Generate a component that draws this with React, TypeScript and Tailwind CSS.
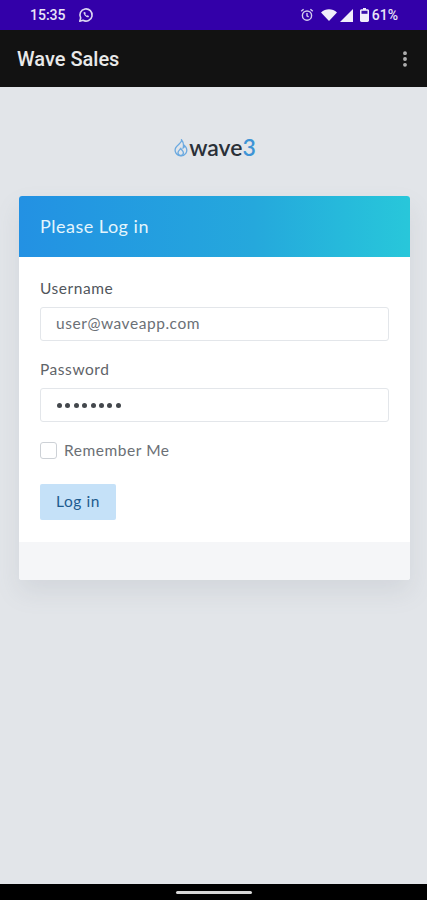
import { MoreVertical } from "lucide-react"

function WhatsappIcon() {
  return (
    <svg viewBox="0 0 16 16" className="h-[16px] w-[16px]" fill="none" stroke="#dcd6f2" strokeWidth="1.6">
      <path d="M1.8 14.2l.9-3.2A6.1 6.1 0 1 1 5 13.3l-3.2.9z" strokeLinejoin="round" />
      <path d="M5.6 5.2c-.3 2.4 2.6 5.4 5 5.1l.4-1.3-1.5-.8-.7.6c-.7-.3-1.3-1-1.6-1.7l.6-.7-.7-1.5-1.5.3z" fill="#dcd6f2" stroke="none" />
    </svg>
  )
}

function StatusIcons() {
  return (
    <div className="flex items-center">
      <svg viewBox="0 0 14 14" className="mr-[7px] h-[14px] w-[14px]" fill="none" stroke="#d4cdee" strokeWidth="1.4">
        <circle cx="7" cy="7.6" r="4.6" />
        <path d="M7 5v2.8l1.6 1M1.2 3.2l2.4-2M12.8 3.2l-2.4-2" />
      </svg>
      <svg viewBox="0 0 16 12" className="mr-[3px] h-[12px] w-[16px]" fill="#f1eefb">
        <path d="M0 3.4C4.6-.8 11.4-.8 16 3.4L8 12z" />
      </svg>
      <svg viewBox="0 0 13 13" className="mr-[7px] h-[13px] w-[13px]" fill="#f1eefb">
        <path d="M13 0v13H0z" />
      </svg>
      <svg viewBox="0 0 9 14" className="mr-[3px] h-[14px] w-[9px]" fill="#f1eefb">
        <path d="M3 0h3v1.2h1.4c.9 0 1.6.6 1.6 1.4v10c0 .8-.7 1.4-1.6 1.4H1.6C.7 14 0 13.4 0 12.6v-10c0-.8.7-1.4 1.6-1.4H3z" />
        <rect x="1.5" y="2.8" width="6" height="3" fill="#3a10ac" />
      </svg>
      <span className="text-[14px] font-medium text-[#e8e4f7]">61%</span>
    </div>
  )
}

function Logo() {
  return (
    <div className="flex items-center justify-center">
      <svg viewBox="0 0 16 18" className="h-[18px] w-[16px]" fill="none" stroke="#6aa9e0" strokeWidth="1.3">
        <path d="M8.6 1c.4 3-3.8 4.2-5.8 7.6C.8 12.2 3.600 16.800 8 16.800c4.200 0 6.800-4 5.400-7.600-.5-1.200-1.200-2-1.800-2.600-.1 1.200-.6 2-1.400 2.400C10.800 6 10.400 3 8.600 1z" />
        <path d="M8 16.500c-1.800 0-3-1.300-3-2.900 0-1.500 1.500-2.400 2.800-4.100.5 1.300 2.600 2.400 2.600 4.200 0 1.500-1 2.800-2.400 2.800z" />
      </svg>
      <span className="text-[23px] font-semibold leading-none text-[#2a3038]">wave</span>
      <span className="text-[23px] font-semibold leading-none text-[#3d94d6]">3</span>
    </div>
  )
}

export default function App() {
  return (
    <div className="flex h-[900px] w-[427px] flex-col overflow-hidden bg-[#e2e5e9] font-['Lato',sans-serif]">
      <div className="flex h-[30px] shrink-0 items-center justify-between bg-[#3300a9] pl-[30px] pr-[29px] font-['Roboto',sans-serif]">
        <div className="flex items-center gap-[12px]">
          <span className="text-[14px] font-medium text-[#e8e4f7]">15:35</span>
          <WhatsappIcon />
        </div>
        <StatusIcons />
      </div>

      <header className="flex h-[57px] shrink-0 items-center justify-between bg-[#121212] pl-[17px] pr-[12px] font-['Roboto',sans-serif]">
        <h1 className="text-[20px] font-medium text-[#e9e9e9]">Wave Sales</h1>
        <MoreVertical className="h-[20px] w-[20px] text-[#b5b5b5]" strokeWidth={2.6} />
      </header>

      <main className="flex-1 pl-[19px] pr-[17px] pt-[49px]">
        <Logo />

        <div className="mt-[37px] overflow-hidden rounded-[3px] bg-white shadow-[0_12px_24px_rgba(120,130,145,0.14)]">
          <div className="flex h-[61px] items-center bg-gradient-to-r from-[#2391e3] via-[#25a8dc] via-60% to-[#28c7da] px-[21px] text-[18px] tracking-[0.5px] text-[#e4f5fc]">
            Please Log in
          </div>

          <form className="flex h-[285px] flex-col px-[21px] pt-[21px]">
            <label className="text-[15.500px] leading-[20px] tracking-[0.55px] text-[#51565c]">Username</label>
            <div className="mt-[9px] flex h-[34px] items-center rounded-[3px] border border-[#e3e6ea] px-[15px] text-[15.500px] tracking-[0.55px] text-[#6b7076]">
              user@waveapp.com
            </div>

            <label className="mt-[18px] text-[15.500px] leading-[20px] tracking-[0.55px] text-[#5f6469]">Password</label>
            <div className="mt-[9px] flex h-[34px] items-center gap-[3.4px] rounded-[3px] border border-[#e3e6ea] px-[16px]">
              {Array.from({ length: 8 }).map((_, i) => (
                <span key={i} className="h-[5px] w-[5px] rounded-full bg-[#43474c]" />
              ))}
            </div>

            <div className="mt-[20px] flex h-[17px] items-center gap-[7px]">
              <span className="h-[17px] w-[17px] rounded-[3px] border border-[#cdd1d6] bg-white" />
              <span className="text-[15.500px] tracking-[0.55px] text-[#6b7076]">Remember Me</span>
            </div>

            <button
              type="button"
              className="mt-[25px] h-[36px] w-[76px] rounded-[2px] bg-[#c5e1f8] text-[15.500px] tracking-[0.55px] text-[#1d5b8f]"
            >
              Log in
            </button>
          </form>

          <div className="h-[38px] bg-[#f5f6f8]" />
        </div>
      </main>

      <div className="flex h-[16px] shrink-0 items-center justify-center bg-black">
        <span className="h-[3px] w-[76px] rounded-full bg-[#d6d6d6]" />
      </div>
    </div>
  )
}
